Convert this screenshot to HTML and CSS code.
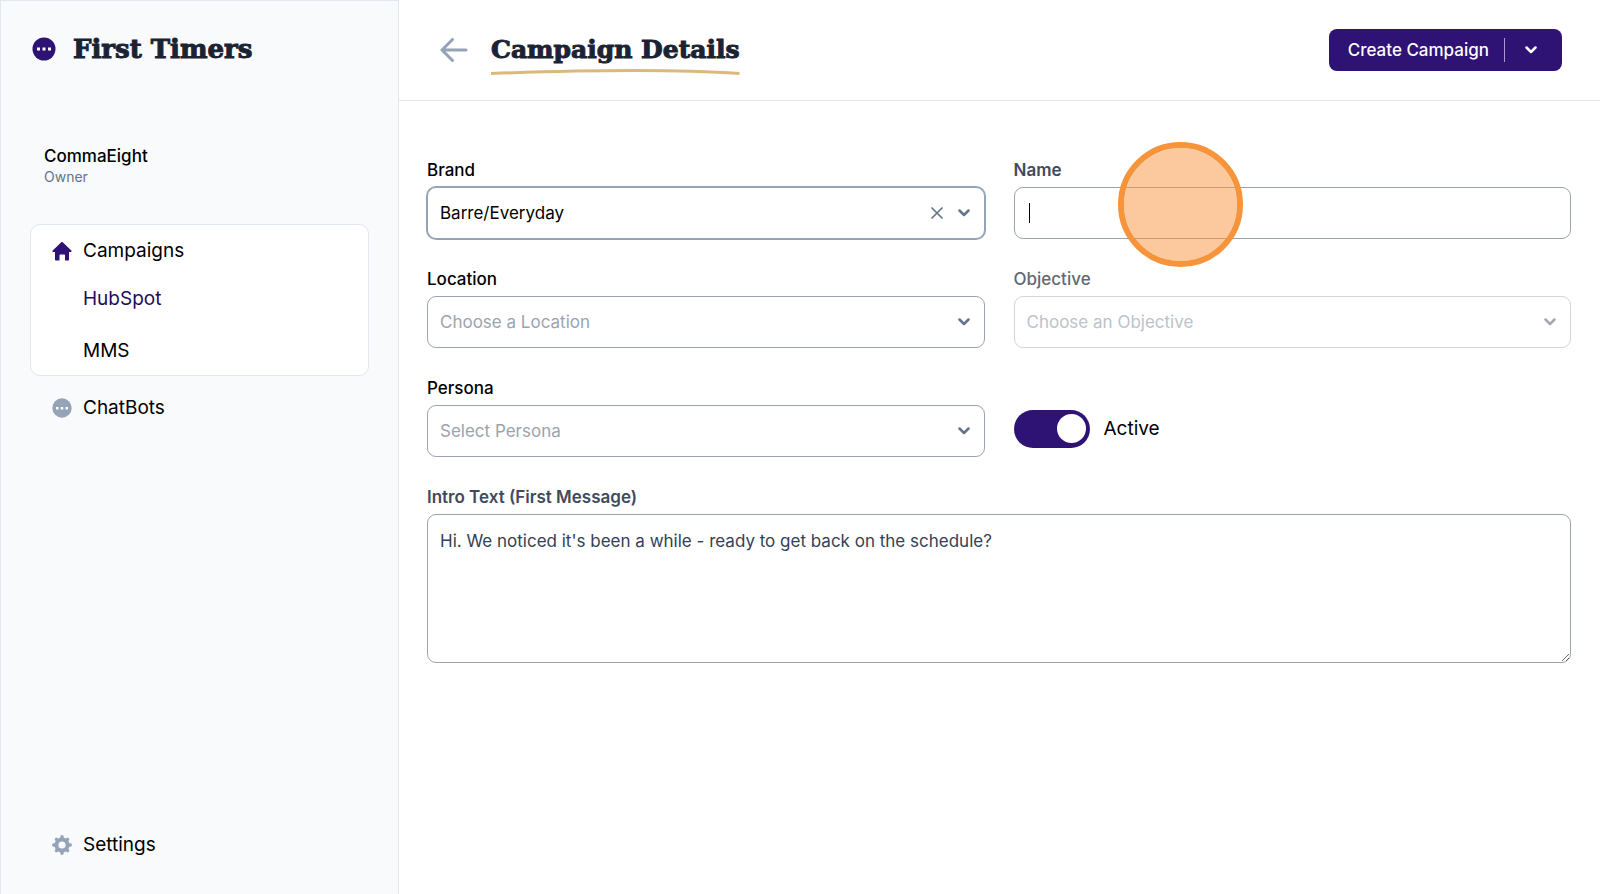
FILE: index.html
```html
<!DOCTYPE html>
<html lang="en">
	<head>
		<meta charset="utf-8">
		<meta name="viewport" content="width=device-width, initial-scale=1.0">
		<title>Campaign Details</title>
		<link rel="stylesheet" href="styles.css">
	</head>

	<body>
		<aside class="sidebar">
			<div class="logo">
				<svg viewBox="0 0 24 24" width="24" height="24"><circle cx="12" cy="12" r="11.5" fill="#2e1274"/><path d="M5 10.500h3v3H5zM10.500 10.500h3v3h-3zM16 10.500h3v3h-3z" fill="#fff"/></svg>
				<h2>First Timers</h2>
			</div>
			<div class="account">
				<strong>CommaEight</strong>
				<small>Owner</small>
			</div>
			<nav>
				<div class="nav-group">
					<a href="#" class="nav-item">
						<svg viewBox="0 0 20 20" width="20" height="20"><path d="M9.300 1.200a1 1 0 0 1 1.400 0l8.600 8.300c.6.600.2 1.500-.6 1.500H17v7.500c0 .6-.4 1-1 1h-3V14.500c0-.6-.4-1-1-1H8.500c-.6 0-1 .4-1 1v5H4c-.6 0-1-.4-1-1V11H1.300c-.8 0-1.200-.9-.6-1.500z" fill="#2e1274"/></svg>
						Campaigns
					</a>
					<a href="#" class="sub-item current">HubSpot</a>
					<a href="#" class="sub-item">MMS</a>
				</div>
				<a href="#" class="nav-item outside">
					<svg viewBox="0 0 20 20" width="20" height="20"><circle cx="10" cy="10" r="9.700" fill="#94a3b8"/><path d="M4 9h2.500v2.500H4zM8.700 9h2.500v2.500H8.700zM13.500 9H16v2.500h-2.500z" fill="#fff"/></svg>
					ChatBots
				</a>
			</nav>
			<a href="#" class="nav-item outside settings">
				<svg viewBox="0 0 20 20" width="20" height="20"><g fill="none" stroke="#94a3b8"><circle cx="10" cy="10" r="5.600" stroke-width="4"/><path d="M10 3.500V1.700M10 16.500v1.800M3.500 10H1.700M16.500 10h1.800M5.400 5.400 4.400 4.400M14.600 14.600l1 1M5.400 14.600l-1 1M14.600 5.400l1-1" stroke-width="3.400" stroke-linecap="round" stroke-linejoin="round"/></g></svg>
				Settings
			</a>
		</aside>

		<div class="page">
			<header>
				<a href="#" class="back" aria-label="Back">
					<svg viewBox="0 0 28 24" width="28" height="24"><path d="M26 12H2M12.500 1.500 2 12l10.500 10.500" fill="none" stroke="#94a3b8" stroke-width="3" stroke-linecap="round" stroke-linejoin="round"/></svg>
				</a>
				<h1>
					Campaign Details
					<svg class="underline" viewBox="0 0 253 8" preserveAspectRatio="none"><path d="M0 5.500Q165-.500 253 5.500" fill="none" stroke="#dcb87c" stroke-width="3"/></svg>
				</h1>
				<div class="split-button">
					<button type="button" class="create">Create Campaign</button>
					<button type="button" class="more" aria-label="More options">
						<svg viewBox="0 0 12 8" width="12" height="8"><path d="M1.500 1.500 6 6l4.500-4.500" fill="none" stroke="currentColor" stroke-width="2.500" stroke-linecap="round" stroke-linejoin="round"/></svg>
					</button>
				</div>
			</header>

			<form>
				<div class="field">
					<label for="brand">Brand</label>
					<div class="control">
						<select id="brand" class="active"><option>Barre/Everyday</option></select>
						<button type="button" class="clear" aria-label="Clear brand">
							<svg viewBox="0 0 12 12" width="12" height="12"><path d="m1 1 10 10M11 1 1 11" fill="none" stroke="#64748b" stroke-width="1.700" stroke-linecap="round"/></svg>
						</button>
						<svg class="chevron" viewBox="0 0 12 8" width="12" height="8"><path d="M1.500 1.500 6 6l4.500-4.500"/></svg>
					</div>
				</div>
				<div class="field">
					<label for="name" class="slate">Name</label>
					<div class="control">
						<input type="text" id="name">
						<span class="caret"></span>
						<span class="click-mark"></span>
					</div>
				</div>
				<div class="field">
					<label for="location">Location</label>
					<div class="control">
						<select id="location" class="empty"><option>Choose a Location</option></select>
						<svg class="chevron" viewBox="0 0 12 8" width="12" height="8"><path d="M1.500 1.500 6 6l4.500-4.500"/></svg>
					</div>
				</div>
				<div class="field disabled">
					<label for="objective">Objective</label>
					<div class="control">
						<select id="objective" class="empty" disabled><option>Choose an Objective</option></select>
						<svg class="chevron" viewBox="0 0 12 8" width="12" height="8"><path d="M1.500 1.500 6 6l4.500-4.500"/></svg>
					</div>
				</div>
				<div class="field">
					<label for="persona">Persona</label>
					<div class="control">
						<select id="persona" class="empty"><option>Select Persona</option></select>
						<svg class="chevron" viewBox="0 0 12 8" width="12" height="8"><path d="M1.500 1.500 6 6l4.500-4.500"/></svg>
					</div>
				</div>
				<div class="toggle">
					<input type="checkbox" id="active" checked>
					<label for="active">Active</label>
				</div>
				<div class="field wide">
					<label for="intro" class="slate">Intro Text (First Message)</label>
					<textarea id="intro">Hi. We noticed it's been a while - ready to get back on the schedule?</textarea>
				</div>
			</form>
		</div>
	</body>
</html>
```
FILE: styles.css
```css
*{
	box-sizing: border-box;
}
body{
	margin: 0;
	min-height: 100vh;
	display: grid;
	grid-template-columns: 399px 1fr;
	font-family: Inter, sans-serif;
	font-size: 17px;
	line-height: 24px;
	color: #000;
	background-color: white;
}
a{
	color: inherit;
	text-decoration: none;
}
svg{
	display: block;
	flex: none;
}
h1, h2{
	margin: 0;
	font-family: "DejaVu Serif", serif;
	font-size: 26px;
	font-weight: bold;
	line-height: 32px;
	white-space: nowrap;
	color: #1b2333;
	-webkit-text-stroke: 1px #1b2333;
}
h1{
	font-size: 25px;
}
button{
	padding: 0;
	border: none;
	background: none;
	font: inherit;
	cursor: pointer;
}

/* sidebar */
.sidebar{
	display: flex;
	flex-direction: column;
	padding: 32px 29px 23px;
	border: 1px solid #e2e8f0;
	border-bottom: none;
	background-color: #f8fafc;
}
.logo{
	display: flex;
	align-items: center;
	gap: 17px;
	padding-left: 2px;
}
.account{
	display: flex;
	flex-direction: column;
	margin-top: 79px;
	padding-left: 14px;
}
.account strong{
	font-weight: 500;
}
.account small{
	font-size: 14px;
	line-height: 18px;
	color: #64748b;
}
nav{
	margin-top: 38px;
}
.nav-group{
	padding-bottom: 2px;
	border: 1px solid #e2e8f0;
	border-radius: 10px;
	background-color: white;
}
.nav-item{
	display: flex;
	align-items: center;
	gap: 11px;
	height: 52px;
	padding-left: 21px;
	font-size: 19px;
}
.nav-item.outside{
	padding-left: 22px;
}
nav .outside{
	margin-top: 6px;
}
.sub-item{
	display: flex;
	align-items: center;
	height: 44px;
	padding-left: 52px;
	font-size: 19px;
}
.sub-item + .sub-item{
	margin-top: 8px;
}
.current{
	color: #1e0a5c;
}
.settings{
	margin-top: auto;
}

/* header */
header{
	display: flex;
	align-items: center;
	height: 101px;
	padding: 0 38px 0 41px;
	border-bottom: 1px solid #e2e4e8;
}
.back{
	margin-right: 23px;
}
h1{
	position: relative;
}
.underline{
	position: absolute;
	left: 0;
	top: 34px;
	width: 100%;
	height: 8px;
}
.split-button{
	display: flex;
	align-items: center;
	height: 42px;
	margin-left: auto;
	border-radius: 8px;
	background-color: #2e1274;
}
.split-button button{
	color: white;
}
.split-button .create{
	height: 42px;
	padding: 0 15px 0 19px;
	font-weight: 500;
}
.split-button .more{
	display: grid;
	place-items: center;
	width: 58px;
	height: 24px;
	padding-right: 5px;
	border-left: 1px solid #a99bd0;
}

/* form */
form{
	display: grid;
	grid-template-columns: 1fr 1fr;
	gap: 28px 29px;
	padding: 57px 29px 28px 28px;
}
.field{
	display: flex;
	flex-direction: column;
	gap: 5px;
}
.wide{
	grid-column: 1 / -1;
}
.field label{
	font-weight: 500;
}
.field .slate{
	font-weight: 600;
	color: #3f4a5c;
}
.control{
	position: relative;
}
select, input[type="text"], textarea{
	display: block;
	width: 100%;
	height: 52px;
	padding: 0 12px;
	border: 1px solid #9ca3af;
	border-radius: 9px;
	background-color: white;
	font: inherit;
	color: #000;
	appearance: none;
	outline: none;
}
select.active{
	border-color: #94a3b8;
	box-shadow: 0 0 0 1px #94a3b8;
}
select.empty{
	color: #9ca3af;
}
textarea{
	height: 149px;
	padding: 14px 12px;
	color: #334155;
}
.disabled label{
	color: #64686f;
}
.disabled select.empty{
	border-color: #d1d5db;
	color: #bcc2cb;
	opacity: 1;
}
.chevron{
	position: absolute;
	right: 15px;
	top: 22px;
	fill: none;
	stroke: #64748b;
	stroke-width: 2.5px;
	stroke-linecap: round;
	stroke-linejoin: round;
	pointer-events: none;
}
.disabled .chevron{
	stroke: #a3a9b3;
}
.clear{
	position: absolute;
	right: 42px;
	top: 20px;
}
.caret{
	position: absolute;
	left: 15px;
	top: 16px;
	width: 1px;
	height: 20px;
	background-color: #000;
}
.click-mark{
	position: absolute;
	left: 104px;
	top: -45px;
	width: 125px;
	height: 125px;
	border: 6px solid #f6943b;
	border-radius: 50%;
	background-color: rgba(249,148,61,.5);
	background-clip: padding-box;
	pointer-events: none;
}
.toggle{
	display: flex;
	align-items: center;
	gap: 14px;
	padding-top: 24px;
	font-size: 19px;
}
.toggle input{
	display: flex;
	justify-content: flex-end;
	align-items: center;
	width: 76px;
	height: 38px;
	margin: 0;
	padding: 0 4px;
	border-radius: 19px;
	background-color: #2e1274;
	appearance: none;
}
.toggle input::before{
	content: "";
	width: 29px;
	height: 29px;
	border-radius: 50%;
	background-color: white;
}
```
